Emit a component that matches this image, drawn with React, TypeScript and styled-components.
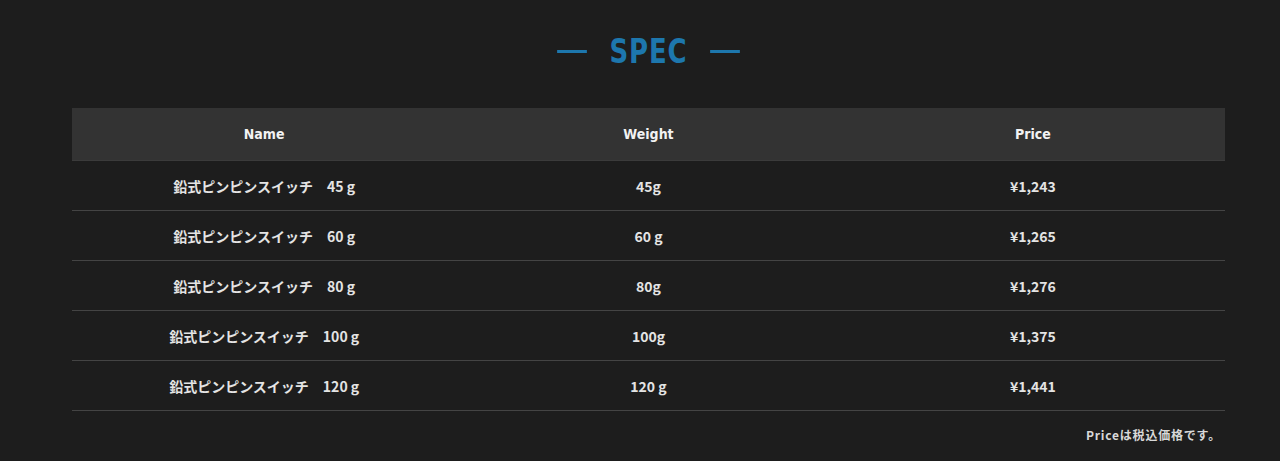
import { FC } from 'react';
import styled, { createGlobalStyle } from 'styled-components';

const GlobalStyle = createGlobalStyle`
    html, body {
        margin: 0;
        padding: 0;
        background: #1d1d1d;
    }
`;

const Section = styled.section`
    width: 1280px;
    height: 461px;
    box-sizing: border-box;
    padding: 30px 55px 0 72px;
    background: #1d1d1d;
    color: #e6e6e6;
    font-family: 'DejaVu Sans Condensed', 'Noto Sans CJK JP', sans-serif;
`;

const Title = styled.h2`
    margin: 0 0 36px;
    height: 42px;
    display: flex;
    align-items: center;
    justify-content: center;
    gap: 27px;
    color: #1d77ad;
    font-family: 'DejaVu Sans Condensed', 'Liberation Sans', sans-serif;
    font-size: 34px;
    font-weight: 700;
    letter-spacing: 1px;
    transform: scaleX(0.85);

    &::before,
    &::after {
        content: '';
        display: block;
        width: 35px;
        height: 3px;
        background: #1d77ad;
    }
`;

const Table = styled.table`
    width: 1153px;
    border-collapse: collapse;
    table-layout: fixed;
`;

const HeadCell = styled.th`
    height: 52px;
    padding: 0;
    background: #333333;
    color: #f2f2f2;
    font-size: 14px;
    font-weight: 700;
    text-align: center;
    border-bottom: 1px solid #3b3b3b;
`;

const Cell = styled.td`
    height: 49px;
    padding: 0;
    text-align: center;
    font-size: 14px;
    font-weight: 700;
    color: #e4e4e4;
    border-bottom: 1px solid #444444;
    font-family: 'Noto Sans CJK JP', 'DejaVu Sans Condensed', sans-serif;
`;

const Note = styled.p`
    margin: 15px 4px 0 0;
    text-align: right;
    font-size: 12px;
    font-weight: 700;
    letter-spacing: 0.8px;
    color: #d8d8d8;
    font-family: 'Noto Sans CJK JP', sans-serif;
`;

interface SpecRow {
    name: string;
    weight: string;
    price: string;
}

const rows: SpecRow[] = [
    { name: '鉛式ピンピンスイッチ　45 g', weight: '45g', price: '¥1,243' },
    { name: '鉛式ピンピンスイッチ　60 g', weight: '60 g', price: '¥1,265' },
    { name: '鉛式ピンピンスイッチ　80 g', weight: '80g', price: '¥1,276' },
    { name: '鉛式ピンピンスイッチ　100 g', weight: '100g', price: '¥1,375' },
    { name: '鉛式ピンピンスイッチ　120 g', weight: '120 g', price: '¥1,441' },
];

const App: FC = () => (
    <>
        <GlobalStyle />
        <Section>
            <Title>SPEC</Title>
            <Table>
                <thead>
                    <tr>
                        <HeadCell>Name</HeadCell>
                        <HeadCell>Weight</HeadCell>
                        <HeadCell>Price</HeadCell>
                    </tr>
                </thead>
                <tbody>
                    {rows.map((row) => (
                        <tr key={row.name}>
                            <Cell>{row.name}</Cell>
                            <Cell>{row.weight}</Cell>
                            <Cell>{row.price}</Cell>
                        </tr>
                    ))}
                </tbody>
            </Table>
            <Note>Priceは税込価格です。</Note>
        </Section>
    </>
);

export default App;
